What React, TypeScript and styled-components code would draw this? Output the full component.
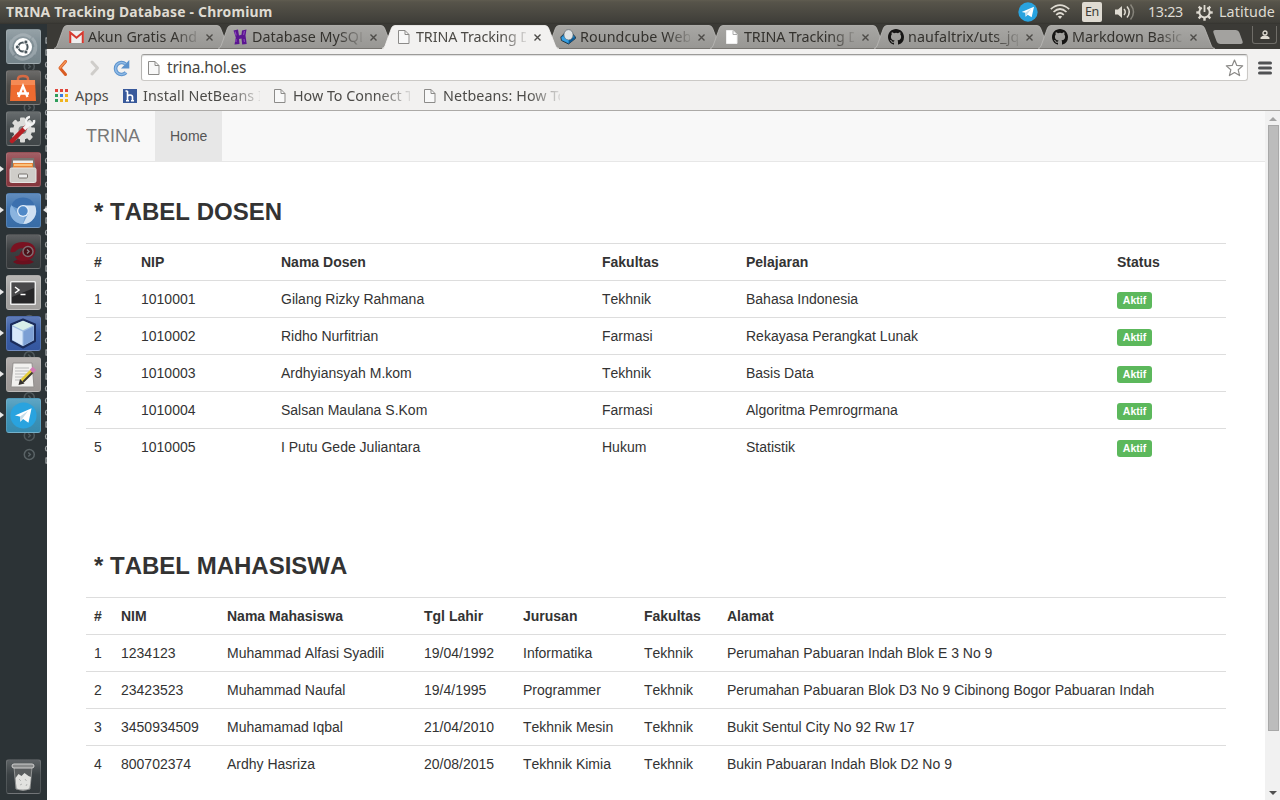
import React from 'react';
import styled, { createGlobalStyle, css } from 'styled-components';

const ui = `"Noto Sans", "Open Sans", sans-serif`;
const web = `"Liberation Sans", Arial, sans-serif`;

const Global = createGlobalStyle`
  * { box-sizing: border-box; }
  body { margin: 0; overflow: hidden; background: #fff; }
  svg { display: block; flex: none; }
`;

const Desktop = styled.div`
  display: grid;
  grid-template: 24px 776px / 47px 1233px;
  width: 1280px;
  height: 800px;
  overflow: hidden;
  font-family: ${ui};
`;
const MenuBar = styled.header`
  grid-column: 1 / 3;
  display: flex;
  align-items: center;
  padding: 0 3px 0 6px;
  background: linear-gradient(#605c50 0, #57544a 2px, #3f3e39 22px, #34332f 24px);
  color: #dfdbd2;
`;
const WindowTitle = styled.div`
  flex: 1;
  font-size: 13.9px;
  font-weight: 700;
  letter-spacing: 0.2px;
  line-height: 24px;
  white-space: pre;
`;
const Indicators = styled.div`
  display: flex;
  align-items: center;
  height: 24px;
`;
const Clock = styled.span<{ $w: number; $ls?: number }>`
  width: ${p => p.$w}px;
  font-size: 14.3px;
  letter-spacing: ${p => p.$ls ?? 0}px;
  line-height: 24px;
  white-space: nowrap;
`;
const Lang = styled.span`
  width: 20px;
  height: 20px;
  margin: 0 13px 0 12px;
  border-radius: 2px;
  background: #dfdbd2;
  color: #3c3b37;
  font-size: 12.5px;
  letter-spacing: -0.4px;
  line-height: 20px;
  text-align: center;
`;

const Launcher = styled.aside`
  position: relative;
  display: flex;
  flex-direction: column;
  align-items: flex-start;
  gap: 6px;
  padding: 5px 0 6px 5.5px;
  background: #2c3336;
  overflow: hidden;
`;
const Tile = styled.div<{ $bg: string; $last?: boolean }>`
  position: relative;
  display: flex;
  align-items: center;
  justify-content: center;
  flex: none;
  width: 35px;
  height: 35px;
  border: 1px solid rgba(255, 255, 255, 0.13);
  border-radius: 3px;
  background: linear-gradient(rgba(255, 255, 255, 0.2), rgba(255, 255, 255, 0.03) 45%, rgba(0, 0, 0, 0.04)), ${p => p.$bg};
  ${p => p.$last && css`margin-top: auto;`}
`;
const Arrow = styled.i<{ $right?: boolean }>`
  position: absolute;
  top: 13px;
  ${p => (p.$right ? 'right: -7px; border-right: 4px solid #e8e8e8;' : 'left: -7px; border-left: 4px solid #e8e8e8;')}
  border-top: 3.5px solid transparent;
  border-bottom: 3.5px solid transparent;
`;
const Backdrop = styled.div`
  position: absolute;
  inset: 0;
`;

const Browser = styled.main`
  display: flex;
  flex-direction: column;
  min-width: 0;
  background: #fff;
`;
const TabStrip = styled.div`
  display: flex;
  height: 25px;
  padding: 1px 0 0 7px;
  background: #3b3a36;
`;
const TabBox = styled.div<{ $active?: boolean }>`
  position: relative;
  z-index: ${p => (p.$active ? 2 : 1)};
  display: flex;
  align-items: center;
  flex: none;
  width: 177px;
  height: 24px;
  margin-right: -13px;
  padding-left: 13px;
  color: ${p => (p.$active ? '#4c4a46' : '#34322e')};
`;
const TabShape = styled.svg`
  position: absolute;
  inset: 0;
`;
const TabTitle = styled.span<{ $ls?: number }>`
  position: relative;
  width: 110px;
  margin: 0 8px 0 3px;
  overflow: hidden;
  font-size: 14.3px;
  letter-spacing: ${p => p.$ls ?? 0}px;
  line-height: 22px;
  white-space: nowrap;
  mask-image: linear-gradient(90deg, #000 86px, transparent 114px);
`;
const Fav = styled.span`
  position: relative;
  display: flex;
  justify-content: center;
  width: 18px;
`;
const NewTab = styled.div`
  flex: none;
  width: 26px;
  height: 14px;
  margin: 5px 0 0 13px;
  border-radius: 3px;
  background: #a3a29f;
  transform: skewX(20deg);
`;
const UserButton = styled.div`
  display: flex;
  align-items: center;
  justify-content: center;
  flex: none;
  width: 25px;
  height: 18px;
  margin: 1px 0 0 11px;
  border: 1px solid #6f6d68;
  border-top: 0;
  border-radius: 0 0 3px 3px;
`;

const Toolbar = styled.div`
  display: flex;
  align-items: center;
  height: 37px;
  padding: 0 8px 0 10px;
  background: #f2f1f0;
`;
const Omnibox = styled.div`
  display: flex;
  align-items: center;
  flex: 1;
  height: 27px;
  margin: 0 10px 0 11px;
  padding: 0 3px 0 6px;
  border: 1px solid #cbc9c6;
  border-top-color: #9c9b99;
  border-left-color: #b5b4b2;
  border-radius: 3px;
  background: #fff;
  box-shadow: inset 0 1px 1px #ddd;
`;
const Address = styled.span`
  flex: 1;
  padding-left: 6px;
  color: #454441;
  font-size: 15.4px;
  line-height: 24px;
  letter-spacing: -0.15px;
`;
const Bookmarks = styled.div`
  display: flex;
  align-items: center;
  height: 25px;
  padding: 0 0 5px 7px;
  border-bottom: 1px solid #acaaa7;
  background: #f2f1f0;
`;
const Bookmark = styled.div<{ $w: number }>`
  display: flex;
  align-items: center;
  width: ${p => p.$w}px;
  height: 18px;
`;
const BookmarkText = styled.span<{ $fade?: boolean; $ls?: number }>`
  flex: 1;
  max-width: 117px;
  margin-left: 5px;
  overflow: hidden;
  color: #4c4b48;
  font-size: 14.3px;
  letter-spacing: ${p => p.$ls ?? 0}px;
  line-height: 20px;
  white-space: nowrap;
  ${p => p.$fade && css`mask-image: linear-gradient(90deg, #000 85px, transparent 122px);`}
`;

const Viewport = styled.div`
  display: flex;
  height: 689px;
`;
const Page = styled.div`
  width: 1218px;
  height: 689px;
  overflow: hidden;
  color: #333;
  font: 14px/20px ${web};
  font-kerning: none;
`;
const Navbar = styled.nav`
  display: flex;
  height: 51px;
  padding-left: 24px;
  border-bottom: 1px solid #e7e7e7;
  background: #f8f8f8;
`;
const Brand = styled.div`
  padding: 15px;
  color: #777;
  font-size: 18px;
`;
const NavLink = styled.div`
  padding: 15px;
  height: 50px;
  background: #e7e7e7;
  color: #555;
`;
const Section = styled.section`
  padding: 32px 39px 0;
  height: 354px;
`;
const Heading = styled.h2`
  margin: 0 0 14px;
  padding: 0 8px;
  height: 35px;
  font-size: 24px;
  line-height: 36px;
`;
const Table = styled.table`
  width: 1140px;
  table-layout: fixed;
  border-collapse: separate;
  border-spacing: 0;
`;
const cell = css`
  height: 37px;
  padding: 8px;
  border-top: 1px solid #ddd;
  text-align: left;
  vertical-align: top;
  white-space: nowrap;
`;
const Th = styled.th`${cell}`;
const Td = styled.td`${cell}`;
const Badge = styled.span`
  display: block;
  width: 35px;
  height: 17px;
  margin-top: 3px;
  border-radius: 3px;
  background: #5cb85c;
  color: #fff;
  font-size: 10.5px;
  font-weight: 700;
  line-height: 17px;
  text-align: center;
`;
const ScrollTrack = styled.div`
  display: flex;
  flex-direction: column;
  align-items: center;
  width: 15px;
  height: 689px;
  padding-left: 1px;
  background: #f1f1f1;
`;
const ScrollThumb = styled.div`
  width: 11px;
  height: 606px;
  border: 1px solid #a8a8a8;
  background: #bcbcbc;
`;
const ScrollArrow = styled.div<{ $down?: boolean }>`
  width: 8px;
  margin: ${p => (p.$down ? 'auto 0 5px' : '6px 0 4px')};
  border: 4px solid transparent;
  ${p => (p.$down ? 'border-top-color: #505050; border-bottom: 0;' : 'border-bottom-color: #a3a3a3; border-top: 0;')}
`;

const PageIcon = ({ solid }: { solid?: boolean }) => (
  <svg width="12" height="14" viewBox="0 0 12 14">
    <path d="M.5.5h6.500l4 4v9H.5z" fill={solid ? '#fff' : '#f8f8f8'} stroke={solid ? '#eee' : '#8c8b89'} />
    <path d="M7 .5v4h4" fill="none" stroke={solid ? '#aaa' : '#8c8b89'} />
  </svg>
);
const Gmail = () => (
  <svg width="15" height="12" viewBox="0 0 15 12">
    <rect width="15" height="12" rx="1" fill="#eee" />
    <path d="M1.2 12V1.5l6.3 5.2 6.3-5.2V12" fill="none" stroke="#d5392e" strokeWidth="2.1" />
  </svg>
);
const Hosting = () => (
  <svg width="16" height="16" viewBox="0 0 16 16">
    <path d="M1.500 1.500L6 .5l1 6 2.500-.8L10 1.500l4.500-1-1 6 1.200 8.500-4.500.5-.7-6-2.500.5.500 5-5 .5 1.300-7z" fill="#5a1590" />
    <path d="M3 2.500l1.200 4M12.500 2l-1 4M4 10v3M12 10l.5 3" stroke="#8b46b8" strokeWidth="1.200" />
  </svg>
);
const Roundcube = () => (
  <svg width="16" height="16" viewBox="0 0 16 16">
    <path d="M.8 8l4-4h7l3.600 4v1.500L8.500 15 1.500 11.500z" fill="#1b84c8" stroke="#20303b" strokeWidth=".9" />
    <path d="M8.500 11l6.500-3v1.500L8.500 15z" fill="#0c5a94" />
    <ellipse cx="8.500" cy="5.800" rx="4.600" ry="5.200" fill="#dfe4e6" stroke="#5b646a" strokeWidth=".7" />
    <path d="M1.500 8.500q1-1 2.500-.8 1 3 4.500 3.300L8.500 14 2 11z" fill="#38a0e2" />
  </svg>
);
const Github = () => (
  <svg width="16" height="16" viewBox="0 0 16 16" fill="#161514">
    <path d="M8 0C3.580 0 0 3.580 0 8c0 3.540 2.290 6.530 5.470 7.590.4.070.55-.17.55-.38 0-.19-.01-.82-.01-1.490-2.010.37-2.530-.49-2.690-.94-.09-.23-.48-.94-.82-1.130-.28-.15-.68-.52-.01-.53.63-.01 1.080.58 1.230.82.72 1.210 1.870.87 2.330.66.07-.52.28-.87.51-1.070-1.780-.2-3.640-.89-3.640-3.950 0-.87.31-1.590.82-2.150-.08-.2-.36-1.020.08-2.120 0 0 .67-.21 2.200.82a7.600 7.600 0 0 1 4 0c1.530-1.040 2.200-.82 2.200-.82.44 1.100.16 1.920.08 2.120.51.56.82 1.270.82 2.150 0 3.070-1.870 3.750-3.650 3.950.29.25.54.73.54 1.480 0 1.070-.01 1.930-.01 2.200 0 .21.15.46.55.38A8.010 8.010 0 0 0 16 8c0-4.420-3.580-8-8-8z" />
  </svg>
);

const CloseMark = styled.svg`
  position: relative;
`;

const Tab = ({ title, icon, active, ls }: { title: string; icon: React.ReactNode; active?: boolean; ls?: number }) => (
  <TabBox $active={active}>
    <TabShape width="177" height="24" viewBox="0 0 177 24">
      <path
        d="M0 24Q2 23.500 3 21L9.500 3Q10.500.5 13 .5H163Q165.500.5 166.500 3L173.500 21Q174.500 23.500 177 24z"
        fill={active ? '#f2f1f0' : 'url(#tabfill)'}
      />
      <path
        d="M0 23.500Q2 23 3 21L9.500 3Q10.500.5 13 .5H163Q165.500.5 166.500 3L173.500 21Q174.500 23.500 177 23.500"
        fill="none"
        stroke={active ? '#f7f6f5' : '#bbbab7'}
        strokeWidth=".8"
      />
      {!active && <path d="M2 23.500h173" stroke="#777571" />}
    </TabShape>
    <Fav>{icon}</Fav>
    <TabTitle $ls={ls}>{title}</TabTitle>
    <CloseMark width="7" height="7" viewBox="0 0 7 7">
      <path d="M.5.5l6 6m0-6l-6 6" stroke="#4d4b48" strokeWidth="1.400" />
    </CloseMark>
  </TabBox>
);

const fragments = 'idosrntaocseoinjtrocnswcirgoatps3nrceio'.split('');
const rings = [42, 83, 260, 296, 332, 373, 411];

const LauncherBackdrop = () => (
  <Backdrop>
    <svg width="47" height="776" viewBox="0 0 47 776">
      <g fill="none" stroke="#5a6366" strokeWidth="1.500">
        {[...rings, 430].map(y => (
          <g key={y} opacity={y === 430 ? 1 : 0.8}>
            <circle cx="29.300" cy={y + 0.5} r="5" />
            <path d={`M28.300 ${y - 1.5}l2 2-2 2`} />
          </g>
        ))}
      </g>
      <g fill="none" stroke="#c4c8c9" strokeWidth="1.300" opacity=".75">
        {fragments.map((f, i) =>
          i > 35 ? null : f < 'n' ? (
            <path key={i} d={`M45.500 ${14 + i * 12}h1.500m-1 0v5m-.5 0h1.500`} />
          ) : (
            <path key={i} d={`M47.500 ${14 + i * 12}q-2 0-2 2.500t2 2.500`} />
          ),
        )}
      </g>
    </svg>
  </Backdrop>
);

const gear = Array.from({ length: 8 }, (_, i) => i * 45);

const Dash = () => (
  <svg width="34" height="33" viewBox="0 0 34 33">
    <g fill="none" stroke="#c3cbcf" opacity=".4" strokeWidth="3">
      <path d="M5 17a12 12 0 0 1 20-9M29 17a12 12 0 0 1-20 9M8 25A13 13 0 0 1 6 10M26 8a13 13 0 0 1 2 16" />
    </g>
    <circle cx="17" cy="17" r="9" fill="#fff" />
    <circle cx="17" cy="17" r="4.600" fill="none" stroke="#4a565c" strokeWidth="2" />
    <g fill="#4a565c" stroke="#fff" strokeWidth=".8">
      <circle cx="11.300" cy="17" r="2" />
      <circle cx="19.900" cy="12" r="2" />
      <circle cx="19.900" cy="22" r="2" />
    </g>
  </svg>
);
const Software = () => (
  <svg width="30" height="30" viewBox="0 0 30 30">
    <path d="M10 9V6q0-3 5-3t5 3v3" fill="none" stroke="#d76a43" strokeWidth="2.500" />
    <path d="M3 7h24l1 21H2z" fill="#ee6b30" />
    <path d="M3 7h24v5H3z" fill="#f58a55" />
    <path d="M10.500 24L15 13l4.500 11M9 20.500h12" fill="none" stroke="#fff" strokeWidth="2.300" />
  </svg>
);
const Settings = () => (
  <svg width="30" height="30" viewBox="0 0 30 30">
    <g fill="#dcdcda">
      <circle cx="14.500" cy="16" r="9.500" />
      {gear.map(a => <rect key={a} x="12" y="3.500" width="5" height="6" rx="1" transform={`rotate(${a} 14.500 16)`} />)}
    </g>
    <circle cx="14.500" cy="16" r="4" fill="#828584" />
    <path d="M4 27L17 14" stroke="#b81f24" strokeWidth="4.500" strokeLinecap="round" />
    <path d="M16 15l6-6" stroke="#f3f3f3" strokeWidth="3.500" />
    <path d="M26 6a4 4 0 1 1-4-3" fill="none" stroke="#f3f3f3" strokeWidth="2.500" />
  </svg>
);
const Files = () => (
  <svg width="28" height="28" viewBox="0 0 28 28">
    <path d="M3 2h22l2 12H1z" fill="#777470" />
    <path d="M4 4.500h20v3H4z" fill="#eee" />
    <path d="M4 7h20v6H4z" fill="#e98438" />
    <path d="M5 8h18v2H5z" fill="#fac17c" />
    <rect x="1" y="12" width="26" height="14.500" rx="1.500" fill="#cfcdc9" stroke="#e6e5e3" />
    <rect x="9.500" y="18" width="9" height="4" rx="1" fill="#eee" stroke="#77736e" />
  </svg>
);
const ChromiumIcon = () => (
  <svg width="28" height="28" viewBox="0 0 28 28">
    <circle cx="14" cy="14" r="13" fill="#6f9fd2" />
    <path d="M14 14L2 8.500A13 13 0 0 1 26 8.500H14z" fill="#3c70ae" />
    <path d="M14 8.500h12A13 13 0 0 1 14 27l5-10z" fill="#cfe0f2" />
    <path d="M2.500 8l6 9 7 3-1.500 7A13 13 0 0 1 2.500 8z" fill="#8bb4df" />
    <circle cx="14" cy="14" r="6" fill="#e3eefa" />
    <circle cx="14" cy="14" r="4.700" fill="#4f88c7" />
  </svg>
);
const RedIcon = () => (
  <svg width="30" height="30" viewBox="0 0 30 30">
    <path d="M5 25q3-3 10-3t11 3q-4 2.500-11 2.500T5 25z" fill="#6b0f1e" />
    <path d="M2.500 15Q3 5 15 5t12.500 9Q26 24 15 24q-7 0-8-5 3 1 5-2 1-4 5-5-5-2-8 1-2 3-6.500 2z" fill="#7a1221" />
    <circle cx="20" cy="14.500" r="5" fill="#4c1018" stroke="#7e6d71" strokeWidth="1.500" />
    <path d="M19 12.500l2 2-2 2" fill="none" stroke="#8d8588" strokeWidth="1.300" />
  </svg>
);
const Terminal = () => (
  <svg width="28" height="28" viewBox="0 0 28 28">
    <rect x="1" y="2" width="26" height="24" rx="1.500" fill="#eee" />
    <rect x="2.500" y="3.500" width="23" height="21" fill="#262628" />
    <path d="M3 4h22v5L3 18z" fill="#49494b" />
    <path d="M6 8l4 3-4 3M11.500 15.500h5" fill="none" stroke="#fff" strokeWidth="1.500" />
  </svg>
);
const NetBeans = () => (
  <svg width="30" height="31" viewBox="0 0 30 31">
    <path d="M15 1.500l12 5v16.500L15 29.500 3 23V6.500z" fill="#9fbde2" stroke="#1b2c5a" strokeWidth="2" strokeLinejoin="round" />
    <path d="M15 2.800l10.500 4.400-10.500 5L4.500 7.200z" fill="#d8efe9" />
    <path d="M4.500 8.500l10 5v14l-10-5.500z" fill="#d9e8f9" />
    <path d="M15.500 13.500l10-5v13.500l-10 5.500z" fill="#7c9fd4" />
  </svg>
);
const Editor = () => (
  <svg width="30" height="30" viewBox="0 0 30 30">
    <path d="M5 3h19l2 24H3z" fill="#f2f1ef" stroke="#928f8d" />
    <path d="M7 8h14M7 11h14M7 14h12M7 17h9M7 20h7" stroke="#bbb" />
    <path d="M14 21L24 11" stroke="#e5cd39" strokeWidth="4.500" />
    <path d="M15 22L25.500 11.500" stroke="#39382f" strokeWidth="1.800" />
    <path d="M23.500 11.500l3-3" stroke="#d27bb4" strokeWidth="5" />
    <path d="M10.500 25l1.500-6 4.500 4.500z" fill="#34312e" />
  </svg>
);
const Plane = ({ size }: { size: number }) => (
  <svg width={size} height={size} viewBox="0 0 30 30">
    <circle cx="15" cy="15" r="14.500" fill="#29a3df" />
    <path d="M5.500 15L24 7l-3.500 16-6-4-3 3-.5-6z" fill="#fff" />
    <path d="M11 16l9-6-6 8-2.500 4z" fill="#c6dce8" />
  </svg>
);
const Trash = () => (
  <svg width="28" height="31" viewBox="0 0 28 31">
    <path d="M5 6l2 22q7 3 14 0l2-22z" fill="#5a5d5e" stroke="#919393" />
    <path d="M6.500 17l3-4 3 2 3-3 4 3 2.500 1-1.500 11.500q-6.500 2.500-13 0z" fill="#e2e2df" />
    <path d="M10 18l2 2m4-2l1.500 2M11 24l2-1m4 2l1-2" fill="none" stroke="#b4b5b3" />
    <rect x="3" y="3" width="22" height="4" rx="2" fill="#888a8a" stroke="#d0d0cf" />
  </svg>
);

const apps: { bg: string; el: React.ReactNode; run?: boolean; cur?: boolean }[] = [
  { bg: '#7b8a91', el: <Dash /> },
  { bg: '#474644', el: <Software /> },
  { bg: '#43494b', el: <Settings /> },
  { bg: '#8a3840', el: <Files />, run: true },
  { bg: '#3a70ad', el: <ChromiumIcon />, run: true, cur: true },
  { bg: '#36393b', el: <RedIcon /> },
  { bg: '#a5a3a1', el: <Terminal />, run: true },
  { bg: '#365aa5', el: <NetBeans />, run: true },
  { bg: '#a29d9b', el: <Editor />, run: true },
  { bg: '#3990b5', el: <Plane size={27} />, run: true },
];

const dosen = [
  ['1', '1010001', 'Gilang Rizky Rahmana', 'Tekhnik', 'Bahasa Indonesia', 'Aktif'],
  ['2', '1010002', 'Ridho Nurfitrian', 'Farmasi', 'Rekayasa Perangkat Lunak', 'Aktif'],
  ['3', '1010003', 'Ardhyiansyah M.kom', 'Tekhnik', 'Basis Data', 'Aktif'],
  ['4', '1010004', 'Salsan Maulana S.Kom', 'Farmasi', 'Algoritma Pemrogrmana', 'Aktif'],
  ['5', '1010005', 'I Putu Gede Juliantara', 'Hukum', 'Statistik', 'Aktif'],
];
const mahasiswa = [
  ['1', '1234123', 'Muhammad Alfasi Syadili', '19/04/1992', 'Informatika', 'Tekhnik', 'Perumahan Pabuaran Indah Blok E 3 No 9'],
  ['2', '23423523', 'Muhammad Naufal', '19/4/1995', 'Programmer', 'Tekhnik', 'Perumahan Pabuaran Blok D3 No 9 Cibinong Bogor Pabuaran Indah'],
  ['3', '3450934509', 'Muhamamad Iqbal', '21/04/2010', 'Tekhnik Mesin', 'Tekhnik', 'Bukit Sentul City No 92 Rw 17'],
  ['4', '800702374', 'Ardhy Hasriza', '20/08/2015', 'Tekhnik Kimia', 'Tekhnik', 'Bukin Pabuaran Indah Blok D2 No 9'],
];

const DataTable = ({ title, heads, widths, rows }: { title: string; heads: string[]; widths: number[]; rows: string[][] }) => (
  <Section>
    <Heading>{title}</Heading>
    <Table>
      <colgroup>{widths.map((w, i) => <col key={i} width={w} />)}</colgroup>
      <thead>
        <tr>{heads.map(h => <Th key={h}>{h}</Th>)}</tr>
      </thead>
      <tbody>
        {rows.map(r => (
          <tr key={r[0]}>
            {r.map((c, i) => <Td key={i}>{c === 'Aktif' ? <Badge>{c}</Badge> : c}</Td>)}
          </tr>
        ))}
      </tbody>
    </Table>
  </Section>
);

const appColors = ['#e0463b', '#e0463b', '#e0463b', '#2f9e5b', '#3a7be0', '#f0b41e', '#2f9e5b', '#f0b41e', '#f0b41e'];

const Gap = styled.span<{ $w: number }>`
  flex: none;
  width: ${p => p.$w}px;
`;

export default function App() {
  return (
    <Desktop>
      <Global />
      <svg width="0" height="0" style={{ position: 'absolute' }}>
        <defs>
          <linearGradient id="tabfill" x2="0" y2="1">
            <stop stopColor="#a8a7a4" />
            <stop offset="1" stopColor="#979693" />
          </linearGradient>
        </defs>
      </svg>
      <MenuBar>
        <WindowTitle>TRINA Tracking Database - Chromium</WindowTitle>
        <Indicators>
          <Plane size={20} />
          <Gap $w={12} />
          <svg width="20" height="16" viewBox="0 0 20 16">
            <g fill="none" stroke="#dfdbd2" strokeWidth="1.700">
              <path d="M.8 5.200Q10-2.800 19.200 5.200" />
              <path d="M3.500 8Q10 2 16.500 8" />
              <path d="M6.200 10.800Q10 7.200 13.800 10.800" />
            </g>
            <path d="M7.800 12.500q2.200-1.600 4.400 0L10 15z" fill="#dfdbd2" />
          </svg>
          <Lang>En</Lang>
          <svg width="20" height="16" viewBox="0 0 20 16">
            <path d="M0 5.500h3L7 2v12l-4-3.500H0z" fill="#dfdbd2" />
            <g fill="none" stroke="#dfdbd2" strokeWidth="1.500">
              <path d="M9 5q2.500 3 0 6" />
              <path d="M12 2.500q4.500 5.500 0 11" />
              <path d="M15.500.5q6 7.500 0 15" opacity=".4" />
            </g>
          </svg>
          <Gap $w={13} />
          <Clock $w={48} $ls={-0.35}>13:23</Clock>
          <svg width="17" height="17" viewBox="0 0 17 17">
            <g fill="#dfdbd2">
              {gear.filter(a => a !== 0).map(a => <rect key={a} x="7.300" y=".3" width="2.400" height="3.600" transform={`rotate(${a} 8.500 8.500)`} />)}
              <rect x="7.600" y="1" width="1.800" height="7" />
            </g>
            <path d="M5.800 3.800a5.200 5.200 0 1 0 5.400 0" fill="none" stroke="#dfdbd2" strokeWidth="1.900" />
          </svg>
          <Gap $w={6} />
          <Clock $w={58} $ls={0.1}>Latitude</Clock>
        </Indicators>
      </MenuBar>

      <Launcher>
        <LauncherBackdrop />
        {apps.map((a, i) => (
          <Tile key={i} $bg={a.bg}>
            {a.run && <Arrow />}
            {a.cur && <Arrow $right />}
            {a.el}
          </Tile>
        ))}
        <Tile $bg="#353b3e" $last><Trash /></Tile>
      </Launcher>

      <Browser>
        <TabStrip>
          <Tab title="Akun Gratis Android" icon={<Gmail />} ls={0.05} />
          <Tab title="Database MySQL" icon={<Hosting />} ls={0.05} />
          <Tab title="TRINA Tracking Database" icon={<PageIcon />} active ls={-0.1} />
          <Tab title="Roundcube Webmail" icon={<Roundcube />} ls={0.1} />
          <Tab title="TRINA Tracking Database" icon={<PageIcon solid />} ls={-0.1} />
          <Tab title="naufaltrix/uts_jquery" icon={<Github />} ls={0.1} />
          <Tab title="Markdown Basics" icon={<Github />} />
          <NewTab />
          <UserButton>
            <svg width="10" height="10" viewBox="0 0 10 10">
              <circle cx="5" cy="3" r="2" fill="none" stroke="#dfdbd2" strokeWidth="1.300" />
              <path d="M.5 9V7.500Q2 5.500 5 5.500t4.500 2V9z" fill="#dfdbd2" />
            </svg>
          </UserButton>
        </TabStrip>
        <Toolbar>
          <svg width="12" height="18" viewBox="0 0 12 18">
            <path d="M8.500 2.500L3 9l5.500 6.500" fill="none" stroke="#d95c22" strokeWidth="3" strokeLinecap="round" strokeLinejoin="round" />
            <path d="M8.500 2.500L3 9" fill="none" stroke="#f39355" strokeWidth="1.500" strokeLinecap="round" />
          </svg>
          <Gap $w={19} />
          <svg width="12" height="18" viewBox="0 0 12 18">
            <path d="M4 3l5.500 6L4 15" fill="none" stroke="#cfcdca" strokeWidth="3" strokeLinecap="round" strokeLinejoin="round" />
          </svg>
          <Gap $w={13} />
          <svg width="17" height="18" viewBox="0 0 17 18">
            <path d="M13 13.500A6 6 0 1 1 12.500 5" fill="none" stroke="#5b92cc" strokeWidth="3.600" />
            <path d="M16.300 1v8.500H8z" fill="#5b92cc" />
            <path d="M13 13.500A6 6 0 1 1 12.500 5" fill="none" stroke="#8fbae6" strokeWidth="1.600" />
          </svg>
          <Omnibox>
            <PageIcon />
            <Gap $w={1} />
            <Address>trina.hol.es</Address>
            <svg width="19" height="18" viewBox="0 0 19 18">
              <path d="M9.500 1l2.300 5.400 5.900.5-4.500 3.900 1.400 5.800-5.100-3.100-5.100 3.100 1.400-5.800L1.300 6.900l5.900-.5z" fill="#fff" stroke="#8b8a88" strokeWidth="1.200" strokeLinejoin="round" />
            </svg>
          </Omnibox>
          <svg width="14" height="14" viewBox="0 0 14 14">
            <path d="M1.500 2h11m-11 5h11m-11 5h11" stroke="#505153" strokeWidth="3" strokeLinecap="round" />
          </svg>
        </Toolbar>
        <Bookmarks>
          <Bookmark $w={69}>
            <svg width="15" height="14" viewBox="0 0 15 14">
              {appColors.map((c, i) => <rect key={i} x={1 + (i % 3) * 5} y={Math.floor(i / 3) * 5} width="3" height="3" fill={c} />)}
            </svg>
            <Gap $w={1} />
            <BookmarkText>Apps</BookmarkText>
          </Bookmark>
          <Bookmark $w={151}>
            <svg width="15" height="14" viewBox="0 0 15 14">
              <rect width="14" height="14" fill="#38599b" />
              <path d="M4.500 2v10M4.500 8q0-2 2.500-2t2.500 2v4M2.500 2h2M3 11.800h3M8 11.800h3" fill="none" stroke="#fff" strokeWidth="1.600" />
            </svg>
            <BookmarkText $fade $ls={0.08}>Install NetBeans IDE</BookmarkText>
          </Bookmark>
          <Bookmark $w={150}>
            <PageIcon />
            <Gap $w={2} />
            <BookmarkText $fade>How To Connect To</BookmarkText>
          </Bookmark>
          <Bookmark $w={150}>
            <PageIcon />
            <Gap $w={2} />
            <BookmarkText $fade $ls={0.1}>Netbeans: How To</BookmarkText>
          </Bookmark>
        </Bookmarks>
        <Viewport>
          <Page>
            <Navbar>
              <Brand>TRINA</Brand>
              <NavLink>Home</NavLink>
            </Navbar>
            <DataTable
              title="* TABEL DOSEN"
              heads={['#', 'NIP', 'Nama Dosen', 'Fakultas', 'Pelajaran', 'Status']}
              widths={[47, 140, 321, 144, 371, 117]}
              rows={dosen}
            />
            <DataTable
              title="* TABEL MAHASISWA"
              heads={['#', 'NIM', 'Nama Mahasiswa', 'Tgl Lahir', 'Jurusan', 'Fakultas', 'Alamat']}
              widths={[27, 106, 197, 99, 121, 83, 507]}
              rows={mahasiswa}
            />
          </Page>
          <ScrollTrack>
            <ScrollArrow />
            <ScrollThumb />
            <ScrollArrow $down />
          </ScrollTrack>
        </Viewport>
      </Browser>
    </Desktop>
  );
}
